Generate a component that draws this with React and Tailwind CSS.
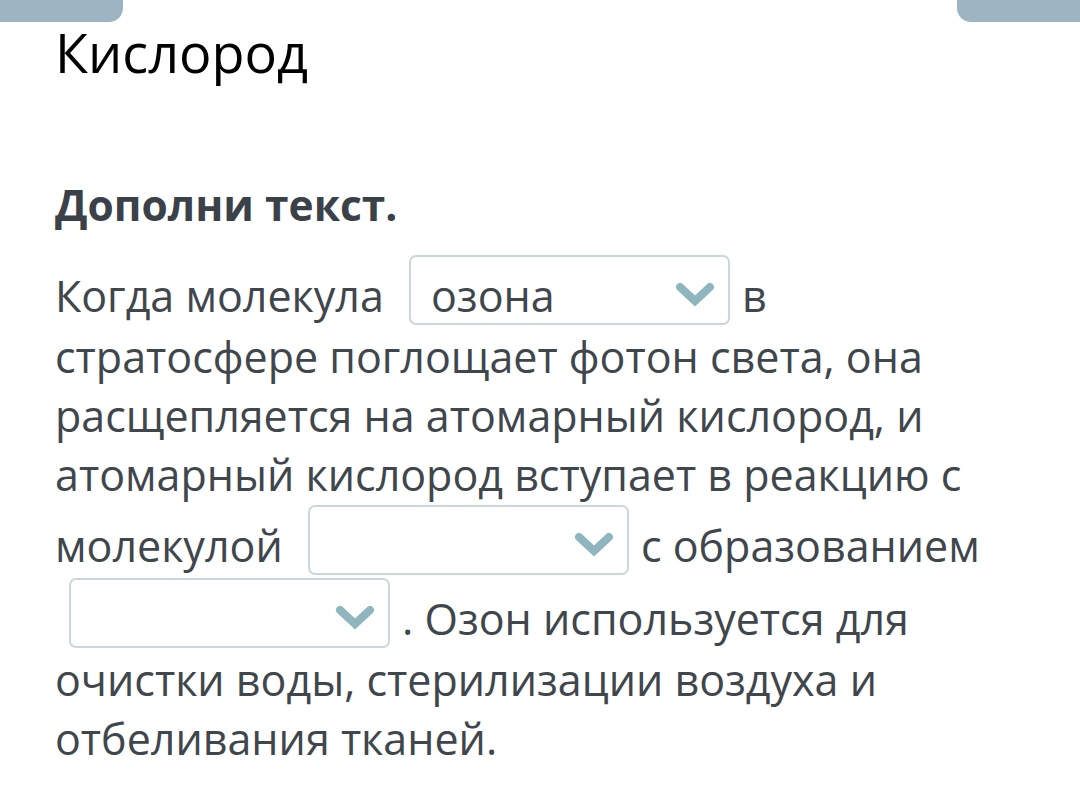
const Chevron = () => (
  <svg
    className="absolute right-[13px] top-[25px] w-[40px] h-[26px]"
    viewBox="0 0 40 26"
    fill="none"
  >
    <polyline
      points="5,5 20,19 35,5"
      stroke="#8fb6be"
      strokeWidth="8"
      strokeLinecap="round"
      strokeLinejoin="miter"
    />
  </svg>
);

function Blank({ value }) {
  return (
    <span className="relative inline-block align-baseline box-border h-[70px] w-[321px] ml-[14px] mr-[12px] mt-[1px] mb-[2px] border-2 border-[#c9d8db] rounded-[7px] bg-white pl-[20px] pt-[14px] leading-[50px] text-[#3f464c]">
      {value || "\u00a0"}
      <Chevron />
    </span>
  );
}

export default function App() {
  return (
    <div className="w-[1080px] h-[788px] bg-white overflow-hidden font-['Open_Sans',sans-serif]">
      {/* top tabs */}
      <div className="flex justify-between">
        <div className="w-[123px] h-[22px] bg-[#9fb4c2] rounded-br-[14px]"></div>
        <div className="w-[123px] h-[22px] bg-[#9fb4c2] rounded-bl-[14px]"></div>
      </div>

      <div className="pl-[55px] pr-[50px]">
        <h1 className="mt-[3px] text-[54px] leading-[54px] text-black">Кислород</h1>

        <h2 className="mt-[105px] text-[42.5px] leading-[42.5px] font-bold text-[#3b4148]">
          Дополни текст.
        </h2>

        <p className="mt-[27px] text-[43px] leading-[59px] text-[#3f464c]">
          Когда молекула <Blank value="озона" />в стратосфере поглощает фотон света, она
          расщепляется на атомарный кислород, и атомарный кислород вступает в реакцию с
          молекулой <Blank />с образованием <Blank />. Озон используется для очистки воды,
          стерилизации воздуха и отбеливания тканей.
        </p>
      </div>
    </div>
  );
}
